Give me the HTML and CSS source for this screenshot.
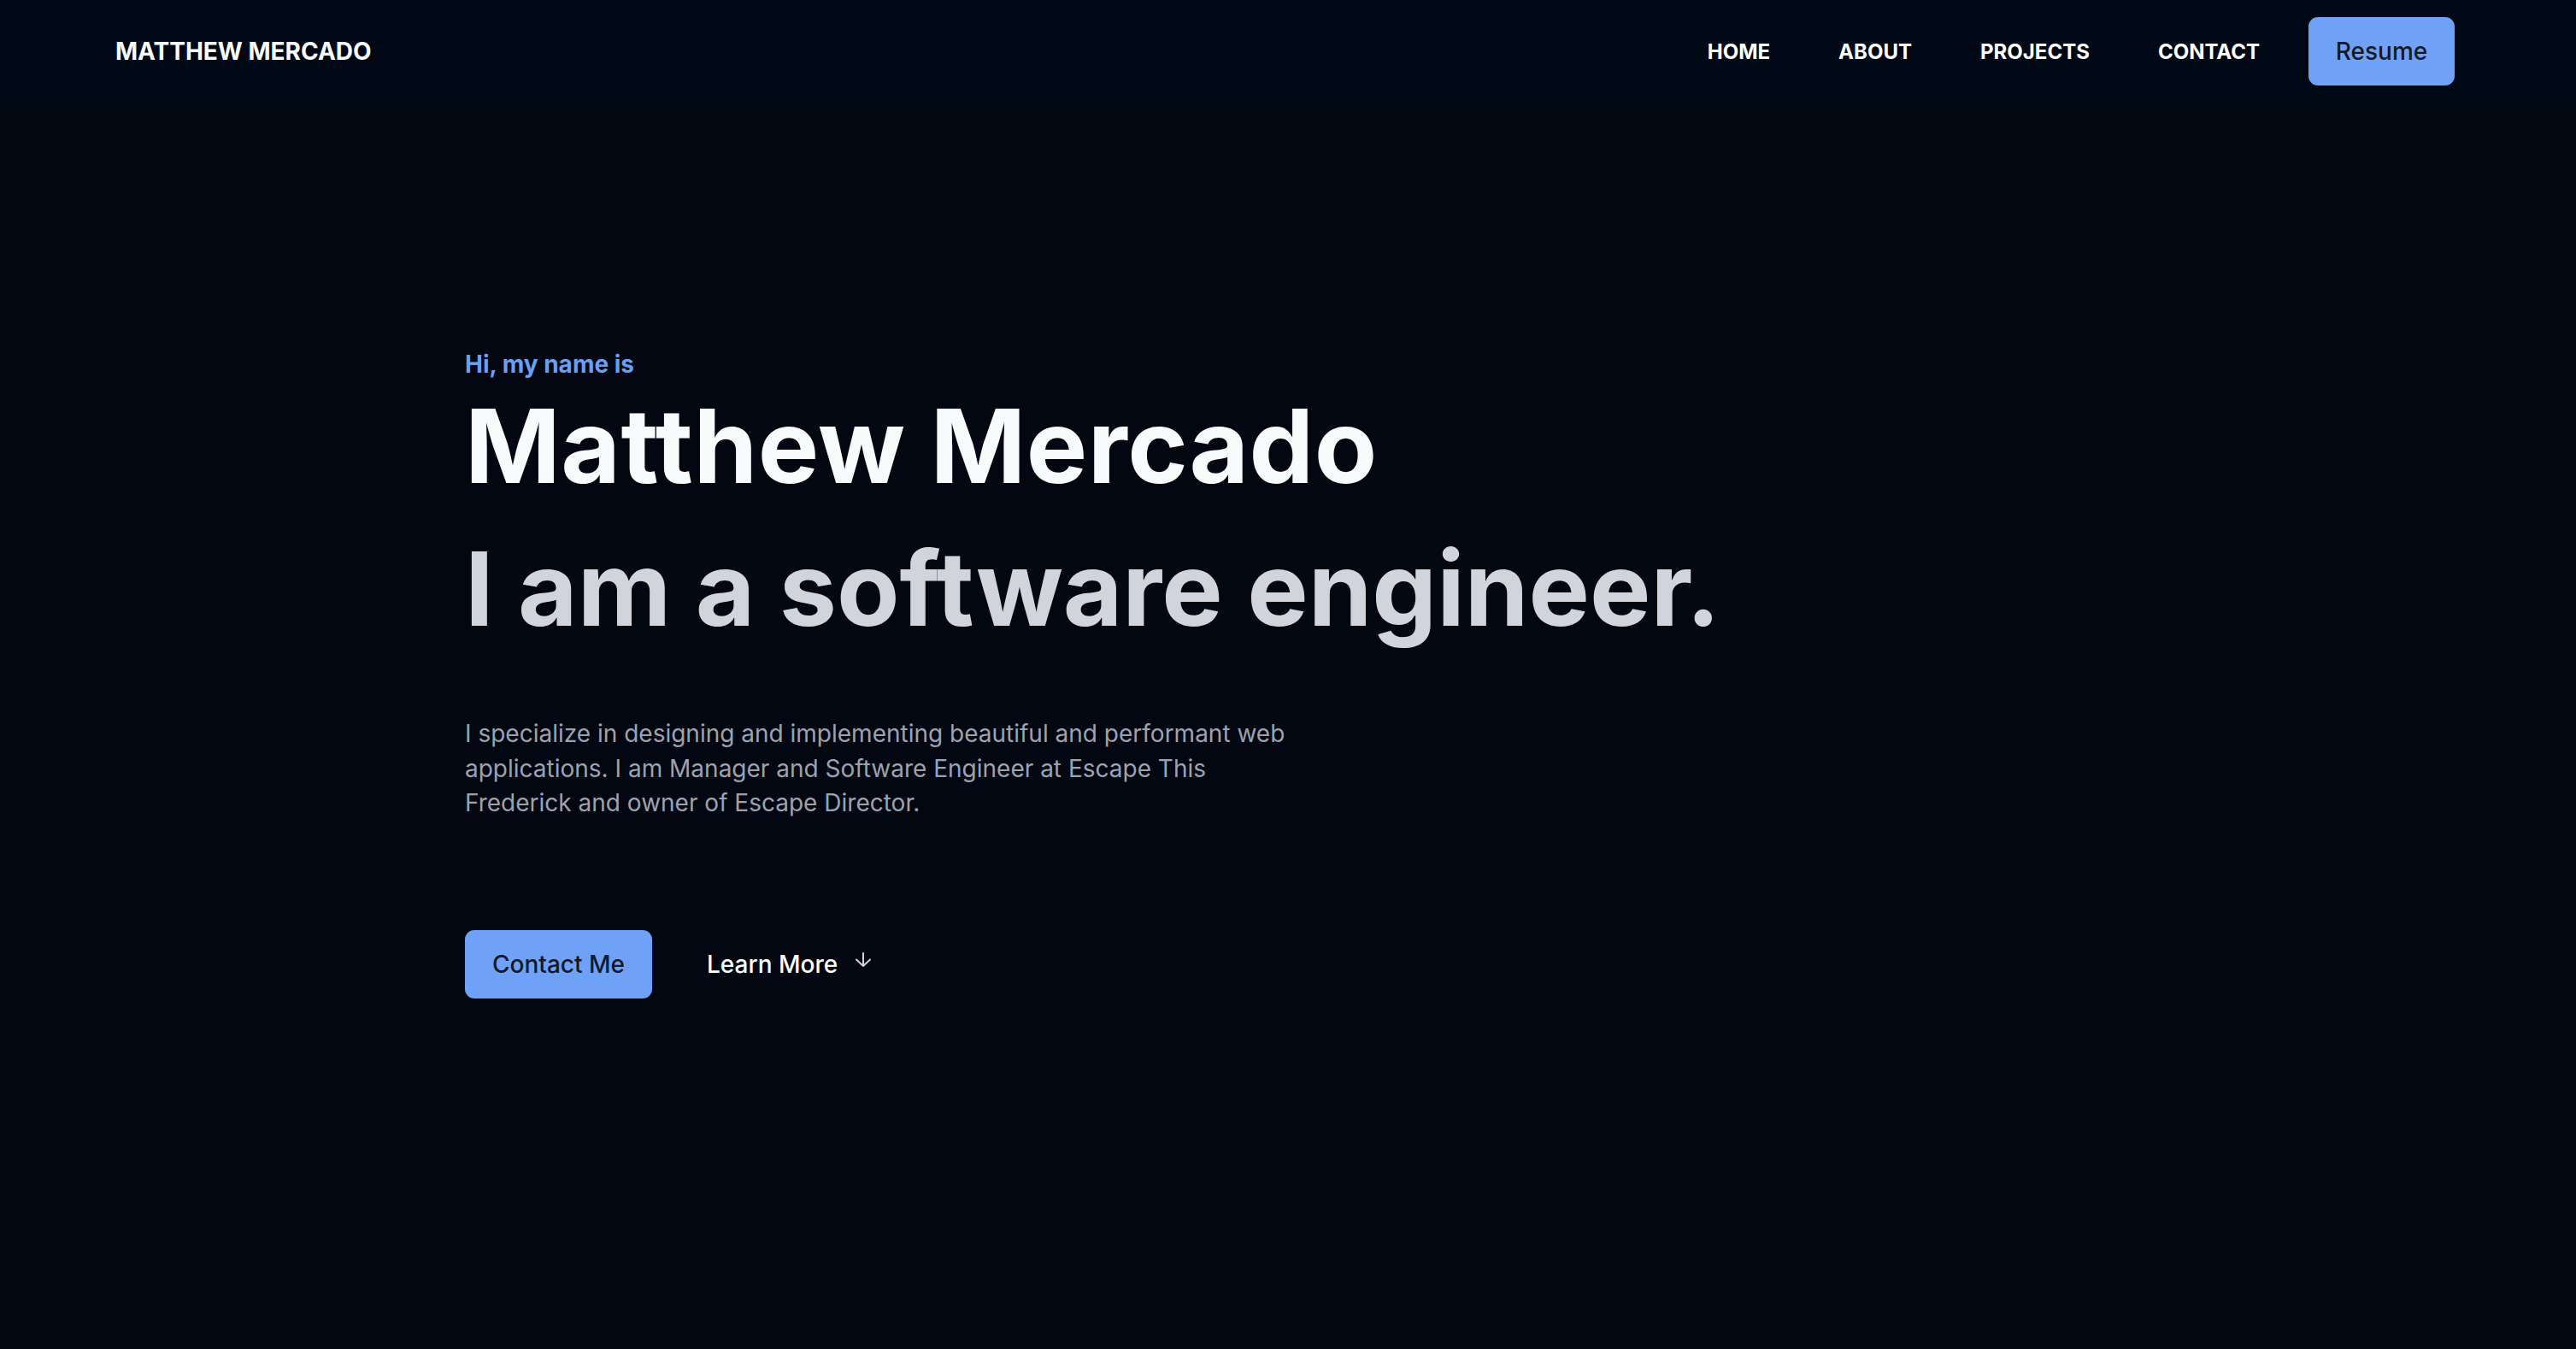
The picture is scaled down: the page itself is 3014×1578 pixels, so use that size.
FILE: index.html
```html
<!DOCTYPE html>
<html lang="en">
<head>
<meta charset="utf-8">
<title>Matthew Mercado</title>
<link rel="stylesheet" href="styles.css">
</head>
<body>
<header class="site-header">
  <a class="logo" href="#">MATTHEW MERCADO</a>
  <nav class="nav">
    <ul class="nav-links">
      <li><a href="#">HOME</a></li>
      <li><a href="#">ABOUT</a></li>
      <li><a href="#">PROJECTS</a></li>
      <li><a href="#">CONTACT</a></li>
    </ul>
    <a class="btn btn-resume" href="#">Resume</a>
  </nav>
</header>
<main class="hero">
  <div class="hero-inner">
    <p class="intro">Hi, my name is</p>
    <h1 class="name">Matthew Mercado</h1>
    <h2 class="tagline">I am a software engineer.</h2>
    <p class="summary">I specialize in designing and implementing beautiful and performant web applications. I am Manager and Software Engineer at Escape This Frederick and owner of Escape Director.</p>
    <div class="actions">
      <a class="btn btn-contact" href="#">Contact Me</a>
      <a class="learn-more" href="#">Learn More
        <svg class="arrow" width="20" height="18" viewBox="0 0 20 18" fill="none" stroke="currentColor" stroke-width="2" stroke-linecap="round" stroke-linejoin="round"><path d="M10 1v15M2 8.5l8 7.5 8-7.5"/></svg>
      </a>
    </div>
  </div>
</main>
</body>
</html>
```
FILE: styles.css
```css
* { box-sizing: border-box; }
html, body { margin: 0; padding: 0; }
body {
  background: #030712;
  font-family: Inter, "Noto Sans", sans-serif;
  color: #f9fafb;
  min-height: 1578px;
}
a { text-decoration: none; color: inherit; }
ul { list-style: none; margin: 0; padding: 0; }

.site-header {
  height: 123px;
  background: #010816;
  display: flex;
  align-items: flex-start;
  justify-content: space-between;
  padding: 20px 142px 0 135px;
}
.logo {
  height: 80px;
  display: flex;
  align-items: center;
  font-size: 28px;
  font-weight: 700;
  color: #f9fafb;
}
.nav {
  display: flex;
  align-items: center;
  gap: 57px;
}
.nav-links {
  display: flex;
  gap: 80px;
}
.nav-links a {
  font-size: 24px;
  font-weight: 700;
  color: #ffffff;
}
.btn {
  display: inline-flex;
  align-items: center;
  justify-content: center;
  height: 80px;
  border-radius: 11px;
  background: #6fa2f6;
  color: #111827;
  font-size: 28px;
  font-weight: 500;
}
.btn-resume { width: 171px; }

.hero { padding: 0 0 0 544px; }
.hero-inner {
  display: flex;
  flex-direction: column;
  align-items: flex-start;
  padding-top: 283px;
}
.intro {
  margin: 0;
  font-size: 28px;
  line-height: 40px;
  font-weight: 700;
  color: #6b9ff0;
}
.name {
  margin: 16px 0 0;
  font-size: 120px;
  line-height: 120px;
  font-weight: 700;
  color: #f9fafb;
  letter-spacing: 0.5px;
}
.tagline {
  margin: 47px 0 0;
  font-size: 120px;
  line-height: 120px;
  font-weight: 700;
  color: #d1d5db;
}
.summary {
  margin: 89px 0 0;
  width: 975px;
  font-size: 28px;
  line-height: 40.5px;
  color: #9ca3af;
}
.actions {
  margin-top: 128px;
  display: flex;
  align-items: center;
  gap: 64px;
}
.btn-contact { width: 219px; }
.learn-more {
  display: flex;
  align-items: center;
  gap: 20px;
  font-size: 28px;
  font-weight: 500;
  color: #ffffff;
}
.arrow { color: #d1d5db; margin-top: -10px; }
```
